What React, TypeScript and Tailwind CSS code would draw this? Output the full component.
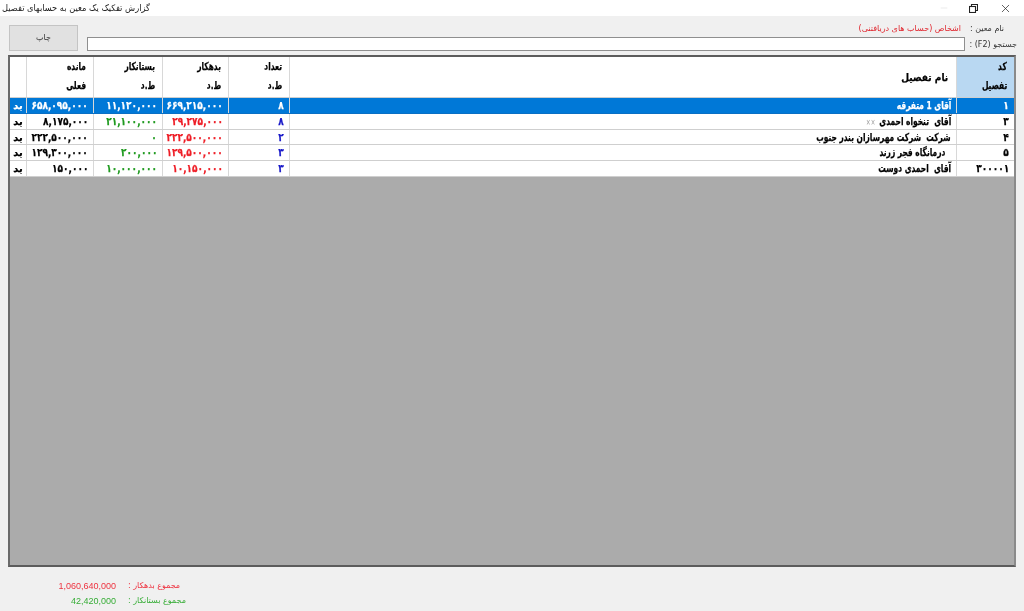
import type { ReactNode } from "react";
import { Minus, X } from "lucide-react";

type Row = {
  code: string;
  name: string;
  note?: string;
  count: string;
  debit: string;
  credit: string;
  balance: string;
};

const rows: Row[] = [
  { code: "۱", name: "آقای 1 متفرقه", count: "۸", debit: "۶۶۹,۲۱۵,۰۰۰", credit: "۱۱,۱۲۰,۰۰۰", balance: "۶۵۸,۰۹۵,۰۰۰" },
  { code: "۳", name: "آقای\u00A0 تنخواه احمدی", note: "××", count: "۸", debit: "۲۹,۲۷۵,۰۰۰", credit: "۲۱,۱۰۰,۰۰۰", balance: "۸,۱۷۵,۰۰۰" },
  { code: "۴", name: "شرکت\u00A0 شرکت مهرسازان بندر جنوب", count: "۲", debit: "۲۲۲,۵۰۰,۰۰۰", credit: "۰", balance: "۲۲۲,۵۰۰,۰۰۰" },
  { code: "۵", name: "\u00A0\u00A0درمانگاه فجر زرند", count: "۳", debit: "۱۲۹,۵۰۰,۰۰۰", credit: "۲۰۰,۰۰۰", balance: "۱۲۹,۳۰۰,۰۰۰" },
  { code: "۳۰۰۰۰۱", name: "آقای\u00A0 احمدی دوست", count: "۳", debit: "۱۰,۱۵۰,۰۰۰", credit: "۱۰,۰۰۰,۰۰۰", balance: "۱۵۰,۰۰۰" },
];

const font = "font-['DejaVu_Sans','Noto_Sans',sans-serif]";
const heavy = "font-bold [-webkit-text-stroke:0.25px_currentColor]";

// DejaVu is much wider than the narrow face in the picture
function Narrow({ children }: { children: ReactNode }) {
  return <span className="inline-block origin-right scale-x-[0.68] whitespace-nowrap">{children}</span>;
}

function Num({ children }: { children: ReactNode }) {
  return <span className="inline-block origin-right scale-x-[0.82] whitespace-nowrap">{children}</span>;
}

function HeadCell({ width, top, bottom }: { width: string; top: string; bottom: string }) {
  return (
    <div className={`${width} flex shrink-0 flex-col items-end justify-between border-r border-[#d8d8d8] pt-[3px] pr-[7px] pb-[4px] text-[11px] leading-[14px] ${heavy}`}>
      <Narrow>{top}</Narrow>
      <Narrow>{bottom}</Narrow>
    </div>
  );
}

export default function App() {
  return (
    <div className={`${font} flex h-[611px] w-[1024px] flex-col overflow-hidden bg-[#f0f0f0] text-black blur-[0.3px]`}>
      <div className="flex h-[16px] shrink-0 items-center justify-between bg-white pr-[12px] pl-[2px]">
        <span dir="rtl" className="inline-block origin-left scale-x-[0.92] text-[9px] leading-none whitespace-nowrap text-[#222]">گزارش تفکیک یک معین به حسابهای تفصیل</span>
        <div className="flex items-center gap-[21px] text-[#222]">
          <Minus className="h-[10px] w-[10px] text-[#ccc]" strokeWidth={1} />
          <svg width="9" height="9" viewBox="0 0 9 9" fill="none" stroke="currentColor" strokeWidth="1.1" className="-ml-[1px]">
            <rect x="0.5" y="2.5" width="6" height="6" />
            <path d="M2.5 2.5V0.5H8.5V6.5H6.5" />
          </svg>
          <X className="h-[13px] w-[13px]" strokeWidth={1.3} />
        </div>
      </div>

      <div className="flex h-[39px] shrink-0 pr-[7px] pl-[9px]">
        <div className="mt-[9px] flex h-[26px] w-[69px] items-center justify-center border border-[#c4c4c4] bg-[#e1e1e1] text-[8px] text-[#333]">
          چاپ
        </div>
        <div className="ml-[9px] flex flex-1 flex-col">
          <div className="flex h-[21px] items-center justify-end pt-[5px] text-[8px]">
            <span dir="rtl" className="text-[#e0242c]">اشخاص (حساب های دریافتنی)</span>
            <span dir="rtl" className="mr-[13px] ml-[8px] w-[35px] whitespace-nowrap text-[#333]">نام معین :</span>
          </div>
          <div className="flex h-[14px] items-center">
            <div className="h-[14px] flex-1 border border-[#8f8f8f] bg-white" />
            <span dir="rtl" className="ml-[4px] w-[48px] shrink-0 pt-[2px] text-[8px] whitespace-nowrap text-[#333]">جستجو (F2) :</span>
          </div>
        </div>
      </div>

      <div className="ml-[8px] flex h-[512px] w-[1008px] shrink-0 flex-col border-2 border-[#5c5c5c] border-r-[#8a8a8a] border-l-[#6a6a6a] bg-[#ababab]">
        <div className="flex h-[41px] shrink-0 border-b border-[#cfcfcf] bg-white">
          <div className="w-[17px] shrink-0 border-r border-[#d8d8d8]" />
          <HeadCell width="w-[67px]" top="مانده" bottom="فعلی" />
          <HeadCell width="w-[69px]" top="بستانکار" bottom="ط.د" />
          <HeadCell width="w-[66px]" top="بدهکار" bottom="ط.د" />
          <HeadCell width="w-[61px]" top="تعداد" bottom="ط.د" />
          <div className={`flex flex-1 items-center justify-end border-r border-[#d8d8d8] pr-[8px] text-[10px] ${heavy}`}>
            <span className="inline-block origin-right scale-x-[0.9] whitespace-nowrap">نام تفصیل</span>
          </div>
          <div className={`flex w-[57px] shrink-0 flex-col items-end justify-between bg-[#b9d8f2] pt-[3px] pr-[7px] pb-[4px] text-[11px] leading-[14px] ${heavy}`}>
            <Narrow>کد</Narrow>
            <Narrow>تفصیل</Narrow>
          </div>
        </div>
        {rows.map((row, i) => {
          const selected = i === 0;
          return (
            <div
              key={row.code}
              className={`flex h-[15.8px] shrink-0 border-b text-[11px] leading-[15px] ${heavy} ${selected ? "border-[#0a6fc4] bg-[#0078d7] text-white" : "border-[#cfcfcf] bg-white"}`}
            >
              <div className="w-[17px] shrink-0 border-r border-[#d8d8d8] text-center text-[10px]">بد</div>
              <div className="flex w-[67px] shrink-0 justify-end border-r border-[#d8d8d8] pr-[5px]"><Num>{row.balance}</Num></div>
              <div className={`flex w-[69px] shrink-0 justify-end border-r border-[#d8d8d8] pr-[5px] ${selected ? "" : "text-[#1f9a1f]"}`}><Num>{row.credit}</Num></div>
              <div className={`flex w-[66px] shrink-0 justify-end border-r border-[#d8d8d8] pr-[5px] ${selected ? "" : "text-[#ee1c25]"}`}><Num>{row.debit}</Num></div>
              <div className={`flex w-[61px] shrink-0 justify-end border-r border-[#d8d8d8] pr-[5px] ${selected ? "" : "text-[#1a1ac8]"}`}><Num>{row.count}</Num></div>
              <div className="flex flex-1 justify-end border-r border-[#d8d8d8] pr-[5px]">
                <span dir="rtl" className="inline-block origin-right scale-x-[0.68] whitespace-nowrap">
                  {row.name}
                  {row.note && <span className="mr-[6px] text-[8px] font-normal text-[#999] [-webkit-text-stroke:0]">{row.note}</span>}
                </span>
              </div>
              <div className="flex w-[57px] shrink-0 justify-end pr-[5px]"><Num>{row.code}</Num></div>
            </div>
          );
        })}
      </div>

      <div className="mt-[14px] grid w-[195px] grid-cols-[58px_auto] gap-x-[12px] gap-y-[5px] pl-[58px] text-[8px] leading-[10px]">
        <span className="text-right font-['Liberation_Sans',sans-serif] text-[9px] text-[#ee3340]">1,060,640,000</span>
        <span dir="rtl" className="text-left whitespace-nowrap text-[#ee3340]">مجموع بدهکار :</span>
        <span className="text-right font-['Liberation_Sans',sans-serif] text-[9px] text-[#37ad37]">42,420,000</span>
        <span dir="rtl" className="text-left whitespace-nowrap text-[#37ad37]">مجموع بستانکار :</span>
      </div>
    </div>
  );
}
